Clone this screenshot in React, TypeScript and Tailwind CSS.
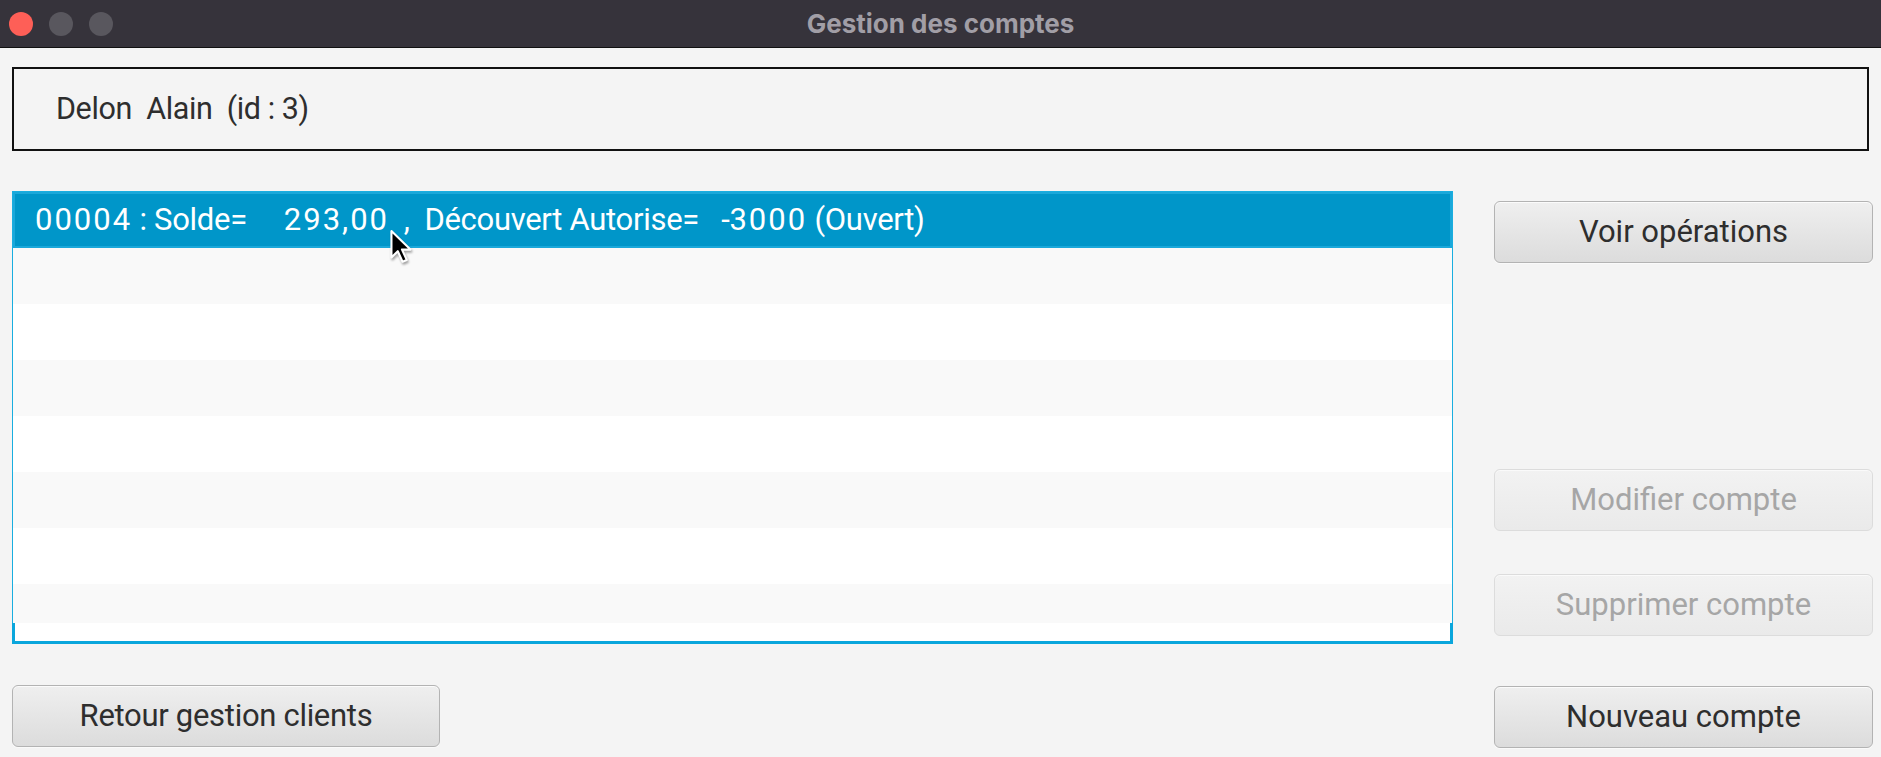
import type { ReactNode } from 'react';

const rows = ['bg-[#f9f9f9]', 'bg-white', 'bg-[#f9f9f9]', 'bg-white', 'bg-[#f9f9f9]', 'bg-white'];

const FxButton = ({ children, disabled, className = '' }: { children: ReactNode; disabled?: boolean; className?: string }) => (
  <button
    type="button"
    className={
      'flex h-[62px] shrink-0 items-center justify-center rounded-[6px] border text-[31px] ' +
      (disabled
        ? 'border-[#dcdcdc] bg-gradient-to-b from-[#f2f2f2] to-[#eaeaea] text-[#a6a6a6] shadow-[inset_0_1px_0_#fafafa] '
        : 'border-[#b3b3b3] bg-gradient-to-b from-[#efefef] to-[#dcdcdc] text-[#2e2e2e] shadow-[inset_0_1px_0_#fbfbfb,0_1px_0_#fafafa] ') +
      className
    }
  >
    {children}
  </button>
);

const Cursor = () => (
  <svg width="26" height="38" viewBox="0 0 24 36" className="absolute left-[374px] top-[35px] drop-shadow-[1px_2px_1px_rgba(0,0,0,0.35)]">
    <path d="M2 2 L2 27 L8 21 L12.5 31 L16.5 29.3 L12 19.5 L20 19.5 Z" fill="#000" stroke="#fff" strokeWidth="2" strokeLinejoin="round" />
  </svg>
);

// digits in the list are set wider than Roboto's
const Num = ({ children }: { children: ReactNode }) => <span className="tracking-[2px]">{children}</span>;

export default function App() {
  return (
    <div className="flex h-[757px] w-[1881px] flex-col overflow-hidden bg-[#f4f4f4] font-['Roboto',sans-serif]">
      {/* window title bar */}
      <div className="grid h-12 shrink-0 grid-cols-[1fr_auto_1fr] items-center border-b border-[#111] bg-[#36333b]">
        <div className="flex items-center gap-4 pl-[9px]">
          <span className="h-6 w-6 rounded-full bg-[#fe5f57]" />
          <span className="h-6 w-6 rounded-full bg-[#59575e]" />
          <span className="h-6 w-6 rounded-full bg-[#59575e]" />
        </div>
        <div className="font-['Inter',sans-serif] text-[26px] font-bold text-[#a19ea6]">Gestion des comptes</div>
        <div />
      </div>

      <div className="flex flex-1 flex-col px-[12px] pt-[19px]">
        {/* client header */}
        <div className="flex h-[84px] items-center border-2 border-[#111] pl-[42px] text-[30.5px] text-[#2e2e2e]">
          <span className="whitespace-pre tracking-[-0.4px]">Delon  Alain  (id : 3)</span>
        </div>

        <div className="mt-[40px] flex">
          {/* left column */}
          <div className="flex w-[1441px] shrink-0 flex-col">
            <div className="flex h-[453px] flex-col border-x border-t border-[#19aee0] bg-white">
              <div className="relative flex h-[56px] shrink-0 items-center border-2 border-[#1aa8da] bg-[#0096c9] pl-[20px] text-[31px] text-white">
                <span className="whitespace-pre tracking-[-0.3px]">
                  <Num>00004</Num> : Solde=     <Num>293,00</Num>  ,  Découvert Autorise=   -<Num>3000</Num> (Ouvert)
                </span>
                <Cursor />
              </div>
              {rows.map((c, i) => (
                <div key={i} className={'h-[56px] shrink-0 ' + c} />
              ))}
              <div className="h-[39px] shrink-0 bg-[#f9f9f9]" />
              <div className="-mx-px flex-1 border-x-[3px] border-b-[3px] border-[#0aa6dc] bg-white" />
            </div>
            <FxButton className="mt-[41px] w-[428px] tracking-[-0.3px]">Retour gestion clients</FxButton>
          </div>

          {/* right column */}
          <div className="ml-[41px] flex w-[379px] shrink-0 flex-col pt-[10px]">
            <FxButton>Voir opérations</FxButton>
            <FxButton disabled className="mt-[206px]">Modifier compte</FxButton>
            <FxButton disabled className="mt-[43px]">Supprimer compte</FxButton>
            <FxButton className="mt-[50px]">Nouveau compte</FxButton>
          </div>
        </div>
      </div>
    </div>
  );
}
